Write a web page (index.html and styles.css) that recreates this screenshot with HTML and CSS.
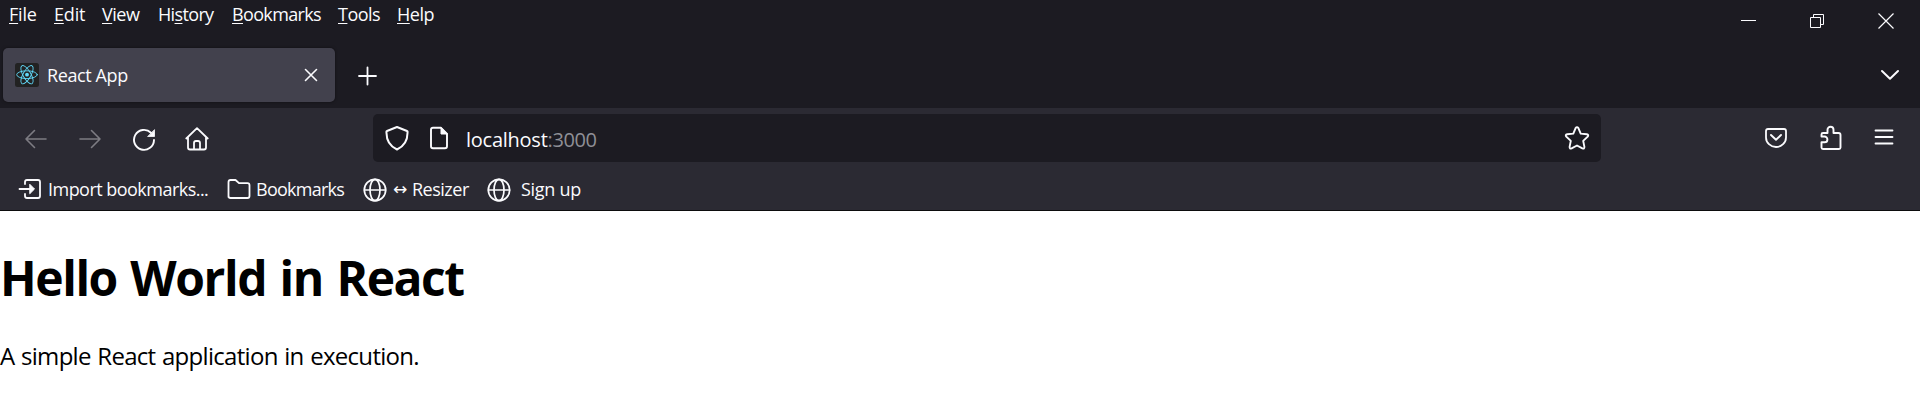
FILE: index.html
```html
<!DOCTYPE html>
<html lang="en">
<head>
<meta charset="utf-8">
<title>React App</title>
<link rel="stylesheet" href="styles.css">
</head>
<body>
<header class="browser">
  <div class="titlebar">
    <nav class="menu">
      <span class="m-file"><u>F</u>ile</span>
      <span class="m-edit"><u>E</u>dit</span>
      <span class="m-view"><u>V</u>iew</span>
      <span class="m-history">Hi<u>s</u>tory</span>
      <span class="m-bookmarks"><u>B</u>ookmarks</span>
      <span class="m-tools"><u>T</u>ools</span>
      <span class="m-help"><u>H</u>elp</span>
    </nav>
    <div class="window-controls">
      <svg width="16" height="18" viewBox="0 0 16 18"><path d="M0 8.500h15" stroke-width="1"/></svg>
      <svg width="16" height="18" viewBox="0 0 16 18"><path d="M.5 5.500h10v10h-10zM3.500 5.500v-3h10v10h-3" stroke-width="1"/></svg>
      <svg width="16" height="18" viewBox="0 0 16 18"><path d="M.5 1.500l15 15M15.500 1.500l-15 15" stroke-width="1.200"/></svg>
    </div>
  </div>
  <div class="tabs">
    <div class="tab">
      <svg class="favicon" width="24" height="24" viewBox="0 0 24 24">
        <rect width="24" height="24" rx="2.500" fill="#222" stroke="none"/>
        <g transform="translate(12 11.700)" stroke="#61dafb" stroke-width=".9">
          <ellipse rx="10.300" ry="3.900"/>
          <ellipse rx="10.300" ry="3.900" transform="rotate(60)"/>
          <ellipse rx="10.300" ry="3.900" transform="rotate(120)"/>
          <circle r="1.900" fill="#61dafb" stroke="none"/>
        </g>
      </svg>
      <span class="tab-title">React App</span>
      <svg class="tab-close" width="14" height="14" viewBox="0 0 14 14"><path d="M1.500 1.500l11 11M12.500 1.500l-11 11" stroke-width="1.600"/></svg>
    </div>
    <svg class="new-tab" width="20" height="20" viewBox="0 0 20 20"><path d="M10.500 1.500v17M2 10h17" stroke-width="1.800"/></svg>
    <svg class="all-tabs" width="20" height="12" viewBox="0 0 20 12"><path d="M2 2l8 7.700L18 2" stroke-width="2"/></svg>
  </div>
  <div class="toolbar">
    <div class="nav">
      <svg class="dim" width="24" height="24" viewBox="0 0 24 24"><path d="M22 12H2M10.500 3.500L2 12l8.500 8.500" stroke-width="1.600"/></svg>
      <svg class="dim" width="24" height="24" viewBox="0 0 24 24"><path d="M2 12h20M13.500 3.500L22 12l-8.500 8.500" stroke-width="1.600"/></svg>
      <svg width="24" height="24" viewBox="0 0 24 24"><path d="M19 5.700A10 10 0 1 0 22 13" stroke-width="1.900"/><path d="M22.500 3v6.500h-6.500z" fill="#fbfbfe" stroke-width=".8"/></svg>
      <svg class="home" width="24" height="24" viewBox="0 0 24 24"><path d="M1.300 11.500L12 1.200l10.700 10.300M3 10.500v10q0 2 2 2h14q2 0 2-2v-10M9 22v-6q0-2 2-2h2q2 0 2 2v6" stroke-width="1.800"/></svg>
    </div>
    <div class="urlbar">
      <svg width="24" height="26" viewBox="0 0 24 26"><path d="M12 2L22 6q.8 0 .5 2C22.500 16 18.500 21.500 12 24.500 5.500 21.500 1.500 16 1.500 8q-.3-2 .5-2z" stroke-width="2"/></svg>
      <svg class="page-icon" width="20" height="24" viewBox="0 0 20 24"><path d="M12 1.800H4q-2 0-2 2v16.500q0 2 2 2h12q2 0 2-2V8z" stroke-width="1.900"/><path d="M12 1.800V8h6z" fill="#fbfbfe" stroke-width="1"/></svg>
      <span class="url"><b>localhost</b><i>:3000</i></span>
      <svg class="star" width="26" height="26" viewBox="0 0 26 26"><path d="M11.600 3.100q1.400-2 2.800 0l2.300 5.500 6.100.7q2.300.5.900 2.300l-4.500 4.300 1.200 6q.1 2.200-2 1.500L13 20.500l-5.400 2.900q-2.100.7-2-1.500l1.200-6-4.500-4.300q-1.400-1.800.9-2.300l6.100-.7z" stroke-width="1.900"/></svg>
    </div>
    <div class="tools">
      <svg width="24" height="24" viewBox="0 0 24 24"><path d="M4 3h16q2 0 2 2v6.500a10 9.500 0 0 1-20 0V5q0-2 2-2z" stroke-width="1.800"/><path d="M7 9l5 4.800L17 9" stroke-width="1.900"/></svg>
      <svg width="24" height="26" viewBox="0 0 24 26"><path d="M8.500 8V4.800a3 3 0 0 1 6 0V8h5q2 0 2 2v12.500q0 1.500-1.500 1.500H4q-1.500 0-1.500-1.500v-5.200h3a2.900 2.900 0 0 0 0-5.800h-3V9.500Q2.500 8 4 8z" stroke-width="1.900"/></svg>
      <svg class="hamburger" width="20" height="20" viewBox="0 0 20 20"><path d="M1.500 3.500h17M1.500 10h17M1.500 16.500h17" stroke-width="1.800"/></svg>
    </div>
  </div>
  <div class="bookmarks">
    <a class="bm-import"><svg width="24" height="24" viewBox="0 0 24 24"><path d="M7 7V5q0-2 2-2h11q2 0 2 2v14q0 2-2 2H9q-2 0-2-2v-2M1.500 12h13" stroke-width="1.800"/><path d="M12 7.500l4.500 4.500-4.500 4.500z" fill="#fbfbfe" stroke-width="1"/></svg><span class="t-import">Import bookmarks...</span></a>
    <a class="bm-folder"><svg width="24" height="24" viewBox="0 0 24 24"><path d="M1.500 19V4q0-2 2-2h5l3.500 3.200h8.500q2 0 2 2V18q0 2-2 2h-17q-2 0-2-2" stroke-width="1.800"/></svg><span class="t-folder">Bookmarks</span></a>
    <a class="bm-resizer"><svg width="24" height="24" viewBox="0 0 24 24"><circle cx="12" cy="12" r="10.700" stroke-width="1.700"/><ellipse cx="12" cy="12" rx="5" ry="10.700" stroke-width="1.700"/><path d="M1.500 12h21" stroke-width="1.700"/></svg><span class="arrow">↔</span><span class="t-resizer">Resizer</span></a>
    <a class="bm-signup"><svg width="24" height="24" viewBox="0 0 24 24"><circle cx="12" cy="12" r="10.700" stroke-width="1.700"/><ellipse cx="12" cy="12" rx="5" ry="10.700" stroke-width="1.700"/><path d="M1.500 12h21" stroke-width="1.700"/></svg><span class="t-signup">Sign up</span></a>
  </div>
</header>
<main class="page">
  <h1>Hello World in React</h1>
  <p>A simple React application in execution.</p>
</main>
</body>
</html>
```
FILE: styles.css
```css
* { box-sizing: border-box; }
body {
  margin: 0;
  background: #fff;
  color: #000;
  font-family: "Segoe UI", "Open Sans", "Noto Sans", sans-serif;
  font-size: 18px;
}
svg { display: block; flex: none; fill: none; stroke: #fbfbfe; stroke-linecap: round; stroke-linejoin: round; }
span { white-space: nowrap; }
.browser { height: 211px; background: #1c1b22; color: #fbfbfe; border-bottom: 1px solid #0c0c0d; }

.titlebar { height: 48px; display: flex; justify-content: space-between; }
.menu { display: grid; grid-template-columns: 45px 48px 56px 74px 106px 59px 50px; padding-left: 9px; height: 29px; line-height: 29px; letter-spacing: -.5px; }
.menu u { text-decoration-thickness: 1px; text-underline-offset: 2px; text-decoration-skip-ink: none; }
.m-file, .m-edit { letter-spacing: -.2px; }
.m-bookmarks, .m-history { letter-spacing: -.65px; }
.window-controls { display: flex; gap: 53px; padding: 12px 25px 0 0; }
.window-controls svg { stroke-linecap: butt; stroke-linejoin: miter; }
.window-controls svg:last-child { margin-left: -1px; margin-right: 1px; }

.tabs { height: 60px; display: flex; align-items: flex-start; padding-left: 3px; }
.tab { width: 332px; height: 54px; display: flex; align-items: center; background: #42414d; border-radius: 5px; padding: 0 17px 0 12px; box-shadow: 0 0 3px rgba(0, 0, 0, .5); }
.tab-title { margin-left: 8px; letter-spacing: -.4px; }
.tab-close { margin-left: auto; }
.new-tab { margin: 18px 0 0 22px; }
.all-tabs { margin: 21px 20px 0 auto; }

.toolbar { height: 60px; background: #2b2a33; display: flex; align-items: flex-start; padding-top: 6px; }
.nav { width: 373px; display: flex; gap: 30px; padding: 13px 0 0 24px; }
.nav .dim { stroke: #7d7c83; }
.nav .home { margin-left: -1px; }
.urlbar { width: 1228px; height: 48px; display: flex; align-items: center; background: #1c1b22; border-radius: 5px; padding: 0 11px 0 12px; }
.page-icon { margin-left: 20px; }
.url { margin: 2px 0 0 17px; font-size: 20px; }
.url b { font-weight: 400; letter-spacing: -.25px; }
.url i { font-style: normal; letter-spacing: -.4px; color: #8f8f96; }
.star { margin-left: auto; }
.tools { flex: 1; display: flex; align-items: center; padding-left: 163px; height: 48px; gap: 31px; }
.hamburger { margin-top: -3px; }

.bookmarks { height: 42px; background: #2b2a33; display: flex; align-items: center; padding: 0 0 0 18px; }
.bookmarks a { display: flex; align-items: center; height: 42px; }
.bm-import { width: 209px; }
.bm-folder { width: 136px; }
.bm-resizer { width: 124px; }
.bookmarks svg { margin-top: 2px; }
.bm-import svg { margin-top: 0; }
.t-import { margin-left: 6px; letter-spacing: -.53px; }
.t-folder { margin-left: 5px; letter-spacing: -.75px; }
.arrow { width: 19px; margin: -1px 0 0 6px; font-family: "DejaVu Sans", sans-serif; font-size: 17px; }
.t-resizer { margin-left: 0; letter-spacing: -.5px; }
.t-signup { margin-left: 10px; letter-spacing: -.3px; }

.page { height: 191px; overflow: hidden; }
h1 { margin: 34px 0 0; font-size: 48px; line-height: 66px; font-weight: 700; letter-spacing: -1.45px; word-spacing: 2.500px; }
p { margin: 28px 0 0; font-size: 24px; line-height: 33px; letter-spacing: -.7px; word-spacing: 1px; }
```
